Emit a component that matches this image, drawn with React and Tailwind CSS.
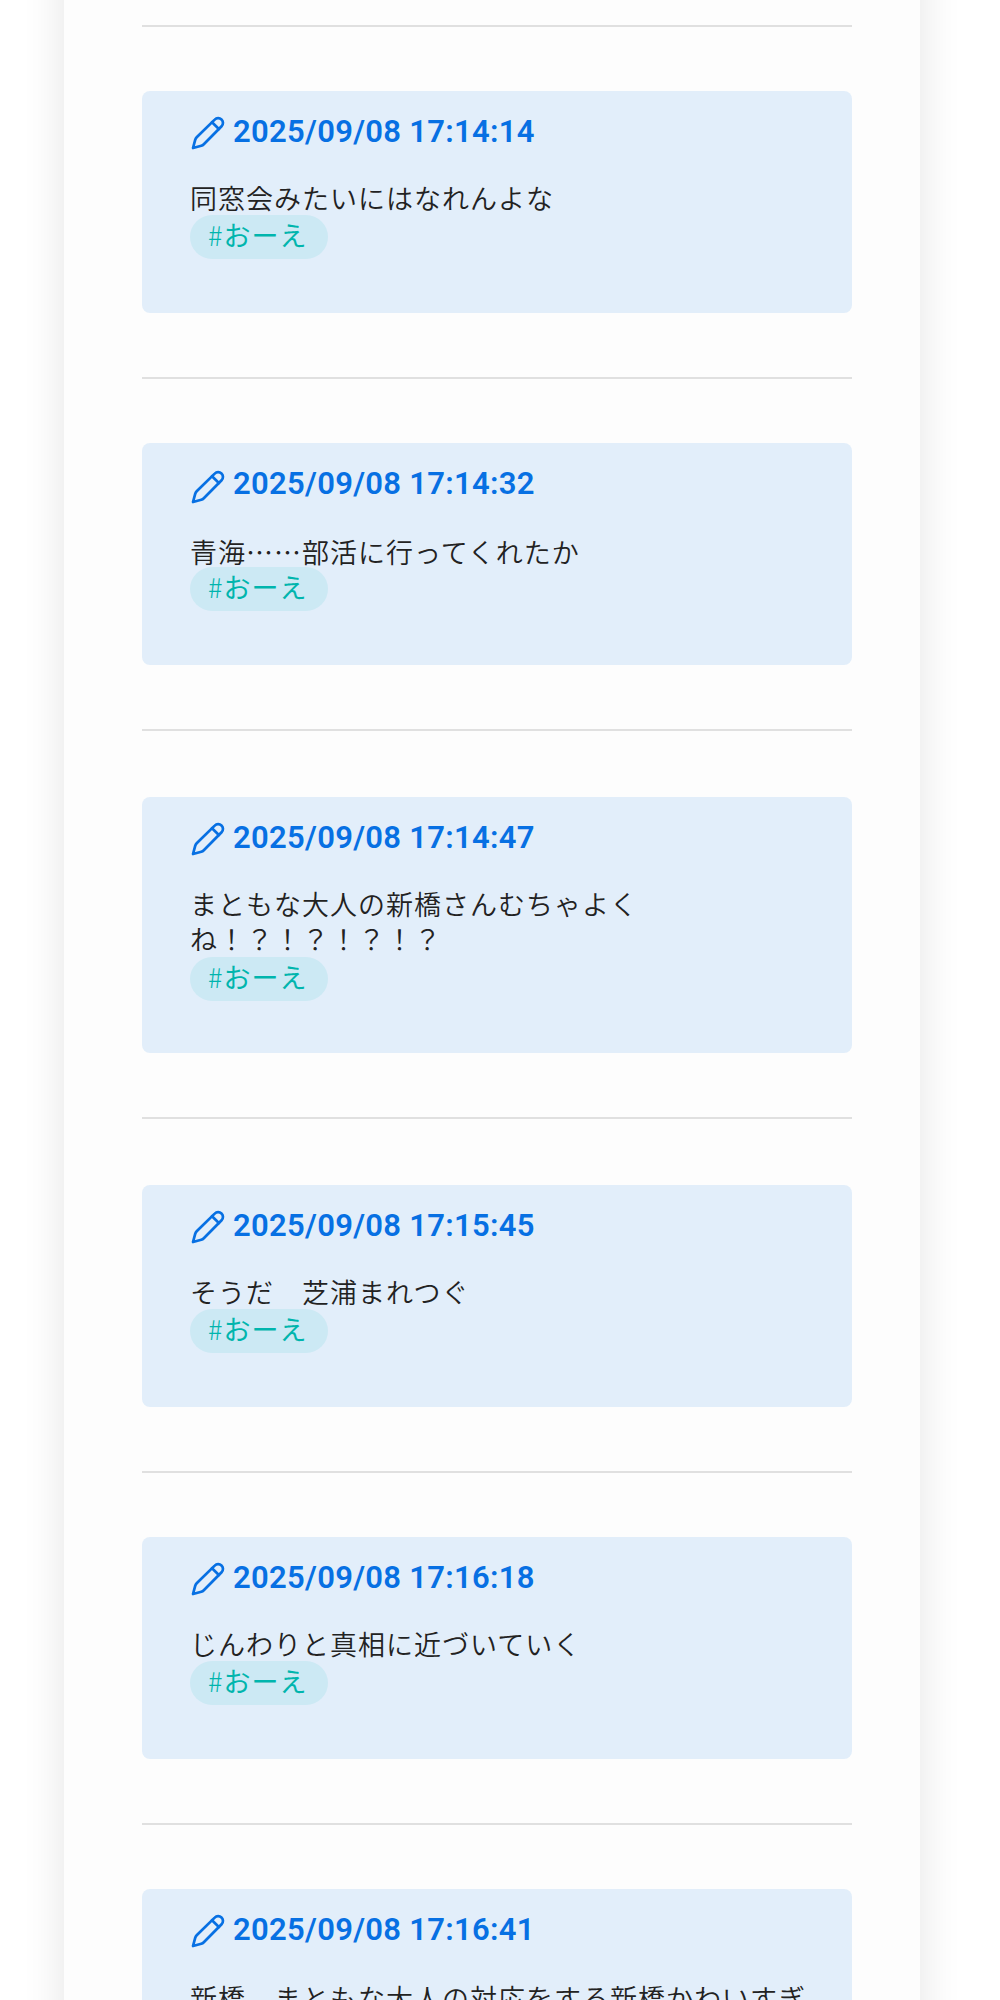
import React from 'react';

const entries = [
  { date: '2025/09/08 17:14:14', lines: ['同窓会みたいにはなれんよな'] },
  { date: '2025/09/08 17:14:32', lines: ['青海……部活に行ってくれたか'], icon: 'mt-[26px]', body: 'mt-[91px]' },
  { date: '2025/09/08 17:14:47', lines: ['まともな大人の新橋さんむちゃよく', 'ね！？！？！？！？'], card: 'mt-[66px] h-[256px]', tag: 'mt-[160px]' },
  { date: '2025/09/08 17:15:45', lines: ['そうだ　芝浦まれつぐ'], card: 'mt-[66px] h-[222px]' },
  { date: '2025/09/08 17:16:18', lines: ['じんわりと真相に近づいていく'] },
  { date: '2025/09/08 17:16:41', lines: ['新橋　まともな大人の対応をする新橋かわいすぎ'], card: 'mt-[64px] h-[256px]', body: 'mt-[91px]' },
];

function PencilIcon({ className }) {
  return (
    <svg
      viewBox="0 0 36 36"
      className={className}
      fill="none"
      stroke="currentColor"
      strokeWidth="2.7"
      strokeLinecap="round"
      strokeLinejoin="round"
    >
      <path d="M24.7 4.6 A4.7 4.7 0 0 1 31.6 11.3 L13.8 29.2 Q12.7 30.3 11.3 30.7 L3 33 L5.2 24.8 Q5.6 23.3 6.7 22.2 Z" />
      <path d="M22 7.3 L28.9 14" />
    </svg>
  );
}

function Entry({ entry }) {
  return (
    <article>
      <hr className="h-[2px] border-0 bg-[#e0e0e0]" />
      <div className={`grid grid-cols-1 items-start rounded-[8px] bg-[#e2eefa] pl-12 ${entry.card || 'mt-[64px] h-[222px]'}`}>
        <div className="col-start-1 row-start-1 flex items-start text-[#0770e3]">
          <PencilIcon className={`h-9 w-9 shrink-0 ${entry.icon || 'mt-[24px]'}`} />
          <time className="mt-[19px] ml-[7px] font-['Roboto',sans-serif] text-[31px] leading-[44px] font-semibold tracking-[0.3px] whitespace-nowrap">
            {entry.date}
          </time>
        </div>
        <div className={`col-start-1 row-start-1 text-[27px] leading-[35px] font-[350] tracking-[1px] whitespace-nowrap text-[#222] ${entry.body || 'mt-[89px]'}`}>
          {entry.lines.map((line, i) => (
            <p key={i}>{line}</p>
          ))}
        </div>
        {entry.lines[0].length < 20 && (
          <span className={`col-start-1 row-start-1 flex h-11 w-[138px] rounded-full bg-[#cce9f4] pl-[18px] text-[27px] leading-[40px] tracking-[1px] whitespace-nowrap text-[#00b5ad] ${entry.tag || 'mt-[124px]'}`}>
            <span className="font-light">#</span>おーえ
          </span>
        )}
      </div>
      <div className="h-[64px]" />
    </article>
  );
}

function App() {
  return (
    <div className="h-[2000px] overflow-hidden bg-white font-['Noto_Sans_CJK_JP',sans-serif]" lang="ja">
      <div className="-mt-20 pl-[64px]">
        <main className="h-[2200px] w-[856px] bg-[#fdfdfd] pt-[105px] pr-[68px] pl-[78px] shadow-[0_0_40px_rgba(0,0,0,0.11)]">
          {entries.map((entry) => (
            <Entry key={entry.date} entry={entry} />
          ))}
        </main>
      </div>
    </div>
  );
}

export default App;
